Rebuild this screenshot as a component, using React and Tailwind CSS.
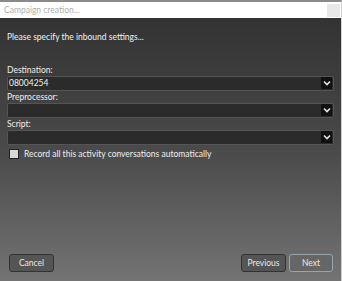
import { useState } from 'react';

function Chevron() {
  return (
    <svg width="8" height="6" viewBox="0 0 8 6" fill="none">
      <path d="M1 1.5 L4 4.5 L7 1.5" stroke="#e5e5e5" strokeWidth="1.6" />
    </svg>
  );
}

function Dropdown({ value }) {
  return (
    <div className="flex h-[15px] items-center rounded-[2px] border border-[#555] bg-[#2b2b2b]">
      <span className="flex-1 pl-[1px] text-[8.5px] leading-none text-[#f0f0f0]">{value}</span>
      <span className="mr-[1px] flex h-[12px] w-[11px] items-center justify-center rounded-[1px] bg-[#111]">
        <Chevron />
      </span>
    </div>
  );
}

export default function App() {
  const [record, setRecord] = useState(false);

  return (
    <div
      className="flex h-[281px] w-[342px] flex-col border-t-2 border-r border-t-[#8a8a8a] border-r-[#d0d0d0] bg-white"
      style={{ fontFamily: 'Lato, "Noto Sans", sans-serif' }}
    >
      {/* Title bar */}
      <div className="flex h-[16px] items-center justify-between pl-[4px] pr-[1px]">
        <span className="text-[8.5px] text-[#b0b0b0]">Campaign creation...</span>
        <span className="h-[13px] w-[13px] bg-[#e8e8e8]" />
      </div>

      {/* Body */}
      <div className="flex flex-1 flex-col bg-gradient-to-b from-[#333333] via-[#4a4a4a] to-[#747474] px-[7px]">
        <p className="mt-[13px] text-[8.5px] text-[#f2f2f2]">Please specify the inbound settings...</p>

        <div className="mt-[20px] flex flex-col">
          <label className="text-[8.5px] leading-[12px] text-[#eeeeee]">Destination:</label>
          <Dropdown value="08004254" />
          <label className="mt-[1px] text-[8.5px] leading-[11px] text-[#eeeeee]">Preprocessor:</label>
          <Dropdown value="" />
          <label className="mt-[1px] text-[8.5px] leading-[11px] text-[#eeeeee]">Script:</label>
          <Dropdown value="" />
        </div>

        <label className="mt-[3px] flex cursor-pointer items-center gap-[5px] pl-[2px]">
          <span
            onClick={() => setRecord(!record)}
            className="h-[10px] w-[10px] border border-[#222] bg-[#d8d8d8]"
          />
          <span className="text-[8.5px] text-[#eeeeee]">Record all this activity conversations automatically</span>
        </label>

        <div className="mt-auto mb-[9px] flex items-center pl-[2px] pr-[1px]">
          <button className="h-[18px] w-[45px] rounded-[3px] border border-[#333] bg-[#555] text-[8.5px] text-[#e8e8e8]">
            Cancel
          </button>
          <div className="ml-auto flex gap-[3px]">
            <button className="h-[18px] w-[45px] rounded-[3px] border border-[#333] bg-[#555] text-[8.5px] text-[#e8e8e8]">
              Previous
            </button>
            <button className="h-[18px] w-[44px] rounded-[3px] border border-[#9aa4ad] bg-[#666] text-[8.5px] text-[#e8e8e8]">
              Next
            </button>
          </div>
        </div>
      </div>
    </div>
  );
}
